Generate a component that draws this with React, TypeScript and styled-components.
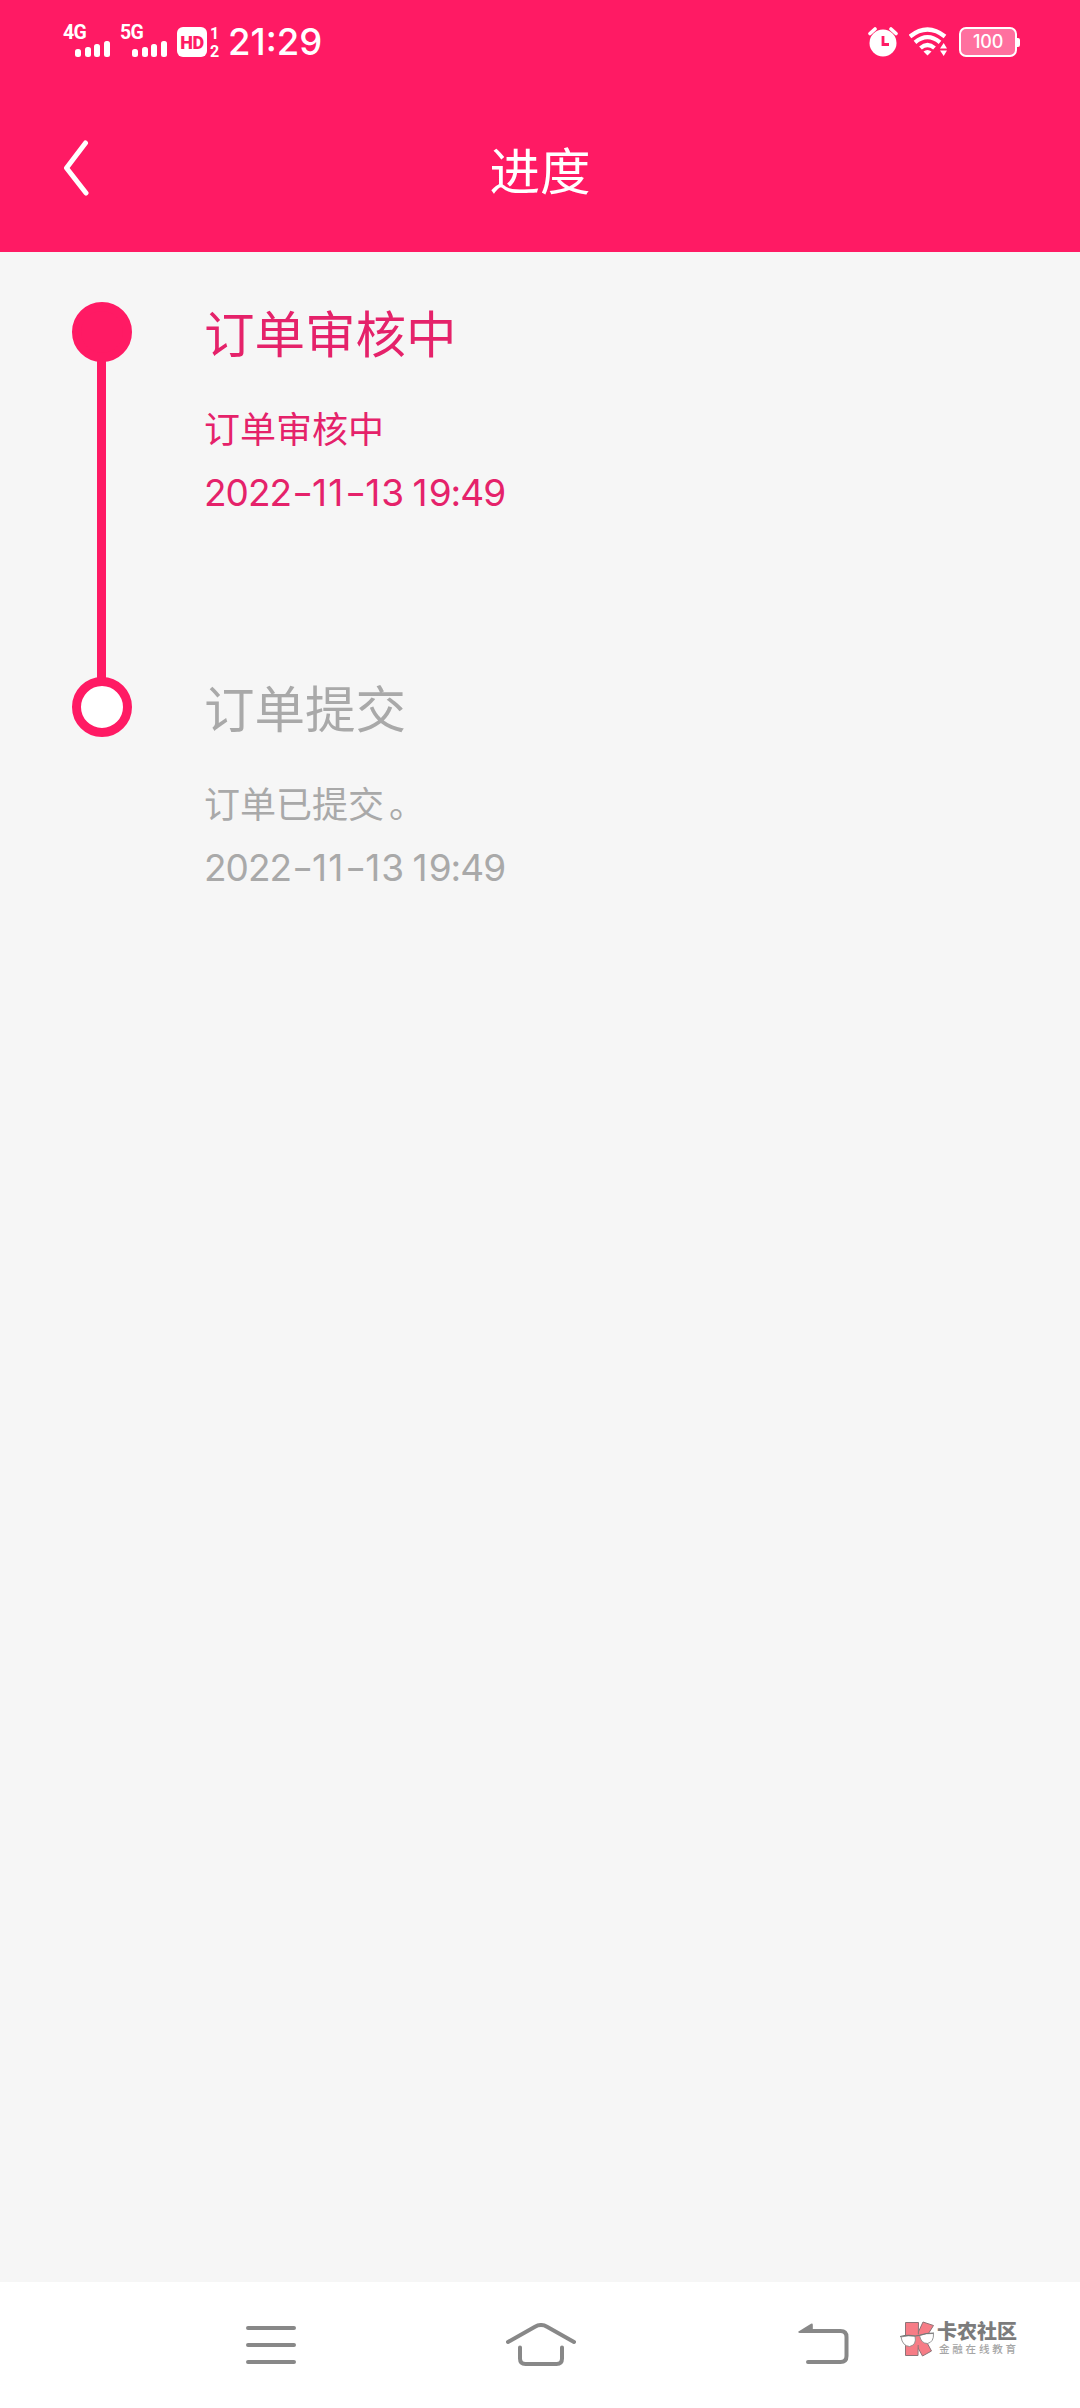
import React from "react";
import styled, { createGlobalStyle } from "styled-components";

const PINK = "#ff1a64";
const GREY = "#888888";

const GlobalStyle = createGlobalStyle`
  * { box-sizing: border-box; }
  body {
    margin: 0;
    background: #f6f6f6;
    font-family: Inter, "Noto Sans CJK SC", sans-serif;
  }
  svg { display: block; flex: none; }
`;

const Screen = styled.div`
  display: flex;
  flex-direction: column;
  width: 1080px;
  height: 2408px;
  background: #f6f6f6;
`;

const Header = styled.header`
  height: 252px;
  background: ${PINK};
  color: #fff;
`;

const StatusBar = styled.div`
  display: flex;
  justify-content: space-between;
  align-items: center;
  height: 84px;
  padding: 0 60px 0 63px;
`;

const StatusGroup = styled.div`
  display: flex;
  align-items: center;
`;

const Signal = styled.div`
  display: flex;
  flex-direction: column;
  width: 57px;
  height: 32px;
  margin-top: -2px;
`;

const Network = styled.span`
  font: 700 19.5px/15px Roboto, sans-serif;
  letter-spacing: -0.8px;
  height: 15px;
`;

const Bars = styled.div`
  display: flex;
  align-items: flex-end;
  gap: 3.7px;
  height: 17px;
  margin: 0 0 0 12px;
`;

const Bar = styled.i<{ $height: number }>`
  width: 6px;
  height: ${(p) => p.$height}px;
  border-radius: 2.5px;
  background: #fff;
`;

const HdBadge = styled.span`
  width: 30px;
  height: 30px;
  border-radius: 6px;
  background: #fff;
  color: ${PINK};
  text-align: center;
  font: 900 18px/31px Roboto, sans-serif;
  letter-spacing: -0.3px;
`;

const SimIndex = styled.span`
  display: flex;
  flex-direction: column;
  justify-content: space-between;
  align-items: center;
  width: 11px;
  height: 31px;
  margin: 0 8px 0 2px;
  font: 700 16px/13px Roboto, sans-serif;
`;

const Clock = styled.time`
  font-size: 36.5px;
  font-weight: 500;
  line-height: 40px;
`;

const Battery = styled.div`
  display: flex;
  align-items: center;
  margin-left: 12px;
`;

const BatteryBody = styled.span`
  width: 58px;
  height: 30px;
  border: 2.5px solid #fff;
  border-radius: 7px;
  background: #ff709f;
  text-align: center;
  font-size: 18px;
  font-weight: 500;
  line-height: 26px;
  letter-spacing: -0.2px;
`;

const BatteryTip = styled.i`
  width: 3px;
  height: 9px;
  border-radius: 0 2px 2px 0;
  background: #fff;
`;

const TitleBar = styled.div`
  display: grid;
  grid-template-columns: 120px 1fr 120px;
  align-items: center;
  height: 167px;
`;

const BackButton = styled.button`
  padding: 0 0 0 60px;
  border: 0;
  background: none;
`;

const PageTitle = styled.h1`
  margin: 0;
  text-align: center;
  font: 400 50.5px/60px "Noto Sans CJK SC", sans-serif;
`;

const Timeline = styled.main`
  flex: 1;
  padding: 50px 72px;
`;

const Step = styled.section`
  display: grid;
  grid-template-columns: 60px 1fr;
  column-gap: 72px;
  height: 375px;
`;

const Rail = styled.div`
  display: flex;
  flex-direction: column;
  align-items: center;
`;

const Dot = styled.i<{ $current: boolean }>`
  width: 60px;
  height: 60px;
  border: 9px solid ${PINK};
  border-radius: 50%;
  background: ${(p) => (p.$current ? PINK : "#fff")};
`;

const Connector = styled.i`
  flex: 1;
  width: 9px;
  margin: -1px 1px -1px 0;
  background: ${PINK};
`;

const StepBody = styled.div<{ $current: boolean }>`
  color: ${(p) => (p.$current ? "#e5226a" : "#a9a9a9")};
`;

const StepTitle = styled.h2`
  margin: 0 0 44px;
  padding-top: 1px;
  font: 400 50.5px/56px "Noto Sans CJK SC", sans-serif;
`;

const StepNote = styled.p`
  margin: 0 0 23px;
  font: 400 36px/48px "Noto Sans CJK SC", sans-serif;
`;

const StepTime = styled.time`
  display: block;
  font-size: 37px;
  line-height: 38px;
  letter-spacing: -1px;
  white-space: nowrap;
`;

const Hyphen = styled.span`
  display: inline-block;
  margin: 0 2px 0 3px;
  transform: scaleX(1.25);
`;

const NarrowDigit = styled.span`
  letter-spacing: 1px;
`;

const FullStop = styled.span`
  margin-left: 5px;
`;

const NavBar = styled.nav`
  display: flex;
  align-items: center;
  height: 126px;
  padding-left: 246px;
  background: #fff;
`;

const NavButton = styled.button<{ $gap?: number }>`
  margin: 0 0 0 ${(p) => p.$gap ?? 0}px;
  padding: 0;
  border: 0;
  background: none;
`;

const Brand = styled.div`
  display: flex;
  align-items: center;
  gap: 2px;
  margin: -13px 0 0 50px;
`;

const BrandText = styled.div`
  display: flex;
  flex-direction: column;
  font-family: "Noto Sans CJK SC", sans-serif;
  white-space: nowrap;
`;

const BrandName = styled.span`
  font-size: 20px;
  font-weight: 900;
  line-height: 20px;
  color: #7c7c7c;
`;

const BrandTagline = styled.span`
  margin-left: 2px;
  font-size: 10.5px;
  font-weight: 500;
  line-height: 15px;
  letter-spacing: 2.8px;
  color: #a5a5a5;
`;

const WifiSlot = styled.span`
  margin-left: 11px;
`;

const AlarmIcon = () => (
  <svg width="30" height="30" viewBox="0 0 30 30">
    <circle cx="15" cy="16" r="13.5" fill="#fff" />
    <path d="M2 6.5L7 2M28 6.5L23 2" stroke="#fff" strokeWidth="3.6" strokeLinecap="round" />
    <path d="M15 9V17.5H21" stroke={PINK} strokeWidth="2.8" fill="none" />
  </svg>
);

const WifiIcon = () => (
  <svg width="38" height="30" viewBox="0 0 38 30">
    <g fill="none" stroke="#fff" strokeWidth="4.2">
      <path d="M1 9.5Q18.5 -4.5 36 9.5" />
      <path d="M6 15.3Q18.5 5 31 15.3" />
      <path d="M11.5 21Q18.5 15 25.5 21" />
    </g>
    <path d="M14.5 24.5Q18.5 21.5 22.5 24.5L18.5 28.5Z" fill="#fff" />
    <path d="M31 21.5L34.7 16L38 21.5ZM31 23.5H38L34.7 29Z" fill="#fff" />
  </svg>
);

const ChevronIcon = () => (
  <svg width="30" height="56" viewBox="0 0 30 56">
    <path
      d="M25.5 3L6.5 28L26 53"
      fill="none"
      stroke="#fff"
      strokeWidth="5"
      strokeLinecap="round"
      strokeLinejoin="round"
    />
  </svg>
);

const MenuIcon = () => (
  <svg width="50" height="44" viewBox="0 0 50 44">
    <path d="M2 5H48M2 22H48M2 39H48" stroke={GREY} strokeWidth="4" strokeLinecap="round" />
  </svg>
);

const HomeIcon = () => (
  <svg width="70" height="44" viewBox="0 0 70 44">
    <g fill="none" stroke={GREY} strokeWidth="4" strokeLinecap="round">
      <path d="M2 19L29 3.7Q35 0.3 41 3.7L68 19" />
      <path d="M14 24.5V35.500Q14 41 19.500 41H50.500Q56 41 56 35.500V24.500" />
    </g>
  </svg>
);

const ReturnIcon = () => (
  <svg width="52" height="44" viewBox="0 0 52 44">
    <path
      d="M10 8H42.500Q48.500 8 48.500 14V33Q48.500 39 42.500 39H10"
      fill="none"
      stroke={GREY}
      strokeWidth="4"
      strokeLinecap="round"
    />
    <path d="M0.500 8.500L13 0.800Q14.800 0 14.800 2V10H1.500Q-0.500 9.500 0.500 8.500Z" fill={GREY} />
  </svg>
);

const BrandLogo = () => (
  <svg width="35" height="36" viewBox="0 0 35 36">
    <g fill="#f67c86" stroke="#8d7478" strokeWidth="1" strokeLinejoin="round">
      <path d="M23 1L33.500 4.500L25 18L31.500 30L22.500 35L17 25V14Z" />
      <path d="M5.500 1.500H18.500L18 34.500H5.500Z" />
    </g>
    <path d="M16 13.500H20V24H16Z" fill="#f67c86" />
    <g fill="#fff" stroke="#8b8b8b" strokeWidth="0.9">
      <path d="M1 16Q8 14 15 15Q17 24 9.500 25.500Q2.500 25 1 16Z" />
      <path d="M19.500 14.500Q26 12 33.500 12.500Q34 21 27.500 22.500Q21 22.500 19.500 14.500Z" />
    </g>
    <path d="M0 15.500Q8 13.500 15 15L19.500 14.300Q26 12 34 12" fill="none" stroke="#777" strokeWidth="1.200" />
  </svg>
);

const CellSignal = ({ label }: { label: string }) => (
  <Signal>
    <Network>{label}</Network>
    <Bars>
      {[8, 10, 13, 16].map((h) => (
        <Bar key={h} $height={h} />
      ))}
    </Bars>
  </Signal>
);

/** Sets hyphens, ones and the ideographic full stop with their own spacing. */
const spaced = (text: string) =>
  text.split(/([-1。])/).map((part, i) => {
    if (part === "-") return <Hyphen key={i}>-</Hyphen>;
    if (part === "1") return <NarrowDigit key={i}>1</NarrowDigit>;
    if (part === "。") return <FullStop key={i}>。</FullStop>;
    return part;
  });

const steps = [
  { title: "订单审核中", note: "订单审核中", time: "2022-11-13 19:49", current: true },
  { title: "订单提交", note: "订单已提交。", time: "2022-11-13 19:49", current: false },
];

export default function App() {
  return (
    <Screen>
      <GlobalStyle />
      <Header>
        <StatusBar>
          <StatusGroup>
            <CellSignal label="4G" />
            <CellSignal label="5G" />
            <HdBadge>HD</HdBadge>
            <SimIndex>
              <span>1</span>
              <span>2</span>
            </SimIndex>
            <Clock>21:29</Clock>
          </StatusGroup>
          <StatusGroup>
            <AlarmIcon />
            <WifiSlot>
              <WifiIcon />
            </WifiSlot>
            <Battery>
              <BatteryBody>100</BatteryBody>
              <BatteryTip />
            </Battery>
          </StatusGroup>
        </StatusBar>
        <TitleBar>
          <BackButton aria-label="返回">
            <ChevronIcon />
          </BackButton>
          <PageTitle>进度</PageTitle>
        </TitleBar>
      </Header>
      <Timeline>
        {steps.map((step, i) => (
          <Step key={step.title}>
            <Rail>
              <Dot $current={step.current} />
              {i < steps.length - 1 && <Connector />}
            </Rail>
            <StepBody $current={step.current}>
              <StepTitle>{step.title}</StepTitle>
              <StepNote>{spaced(step.note)}</StepNote>
              <StepTime>{spaced(step.time)}</StepTime>
            </StepBody>
          </Step>
        ))}
      </Timeline>
      <NavBar>
        <NavButton>
          <MenuIcon />
        </NavButton>
        <NavButton $gap={210}>
          <HomeIcon />
        </NavButton>
        <NavButton $gap={222}>
          <ReturnIcon />
        </NavButton>
        <Brand>
          <BrandLogo />
          <BrandText>
            <BrandName>卡农社区</BrandName>
            <BrandTagline>金融在线教育</BrandTagline>
          </BrandText>
        </Brand>
      </NavBar>
    </Screen>
  );
}
